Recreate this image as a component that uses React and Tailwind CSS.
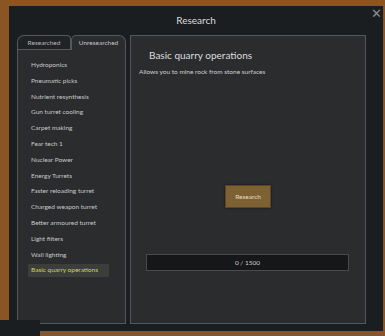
const techs = [
  "Hydroponics",
  "Pneumatic picks",
  "Nutrient resynthesis",
  "Gun turret cooling",
  "Carpet making",
  "Fear tech 1",
  "Nuclear Power",
  "Energy Turrets",
  "Faster reloading turret",
  "Charged weapon turret",
  "Better armoured turret",
  "Light filters",
  "Wall lighting",
  "Basic quarry operations",
];

const selected = "Basic quarry operations";

export default function App() {
  return (
    <div
      className="relative w-[385px] h-[336px] overflow-hidden bg-[#8a5423] pt-[6px] pl-[9px]"
      style={{ fontFamily: "Lato, 'Open Sans', sans-serif" }}
    >
      <div className="relative w-[374px] h-[325px] bg-[#1b1e21] flex flex-col">
        {/* header */}
        <div className="h-[29px] flex items-center justify-center text-[10px] text-[#dcdcdc]">
          Research
        </div>
        <button className="absolute top-[1px] right-[1px] text-[#8b8d90] text-[13px] leading-none">
          ✕
        </button>

        <div className="flex flex-1 pl-[8px] gap-[4px]">
          {/* left column */}
          <div className="w-[109px] flex flex-col">
            <div className="flex h-[14px] items-end">
              <div className="w-[54px] h-[14px] border border-b-0 border-[#55575a] rounded-tl-[7px] rounded-tr-[4px] bg-[#202326] text-[6.5px] text-[#b8b8b8] flex items-center justify-center">
                Researched
              </div>
              <div className="w-[55px] h-[14px] border border-b-0 border-[#55575a] rounded-tl-[5px] rounded-tr-[7px] bg-[#2a2c2e] text-[6.5px] text-[#c4c4c4] flex items-center justify-center">
                Unresearched
              </div>
            </div>
            <div className="h-[275px] border border-t-0 border-[#55575a] bg-[#2a2c2e] pt-[7px] pl-[10px] flex flex-col">
              <div className="border-t border-[#55575a] -ml-[10px] w-[54px] -mt-[7px] mb-[7px]" />
              {techs.map((t) => (
                <div
                  key={t}
                  className="h-[15.8px] flex items-center"
                >
                  <span
                    className={
                      t === selected
                        ? "w-[81px] h-[13px] flex items-center px-[3px] bg-[#3c3e3c] text-[#cbd94e] text-[6.5px] whitespace-nowrap"
                        : "px-[3px] text-[#c8c8c8] text-[6.5px] whitespace-nowrap"
                    }
                  >
                    {t}
                  </span>
                </div>
              ))}
            </div>
          </div>

          {/* right panel */}
          <div className="w-[236px] h-[289px] border border-[#55575a] bg-[#2b2c2e] flex flex-col">
            <div className="pl-[18px] pt-[12px] text-[10px] text-[#dedede] leading-[14px]">
              Basic quarry operations
            </div>
            <div className="pl-[8px] pt-[5px] text-[6.5px] text-[#cfcfcf] leading-[9px]">
              Allows you to mine rock from stone surfaces
            </div>
            <div className="flex justify-center mt-[109px]">
              <button className="w-[46px] h-[23px] bg-[#7d6133] border border-[#5b4524] shadow-[0_0_2px_rgba(0,0,0,0.6)] text-[6.5px] text-[#e6dcc4]">
                Research
              </button>
            </div>
            <div className="mt-[46px] ml-[15px] w-[203px] h-[17px] bg-[#161718] border border-[#4a4b4c] flex items-center justify-center text-[6.5px] text-[#cfcfcf]">
              0 / 1500
            </div>
          </div>
        </div>
      </div>
      <div className="absolute left-0 bottom-0 w-[40px] h-[16px] bg-[#1b1e21]" />
    </div>
  );
}
